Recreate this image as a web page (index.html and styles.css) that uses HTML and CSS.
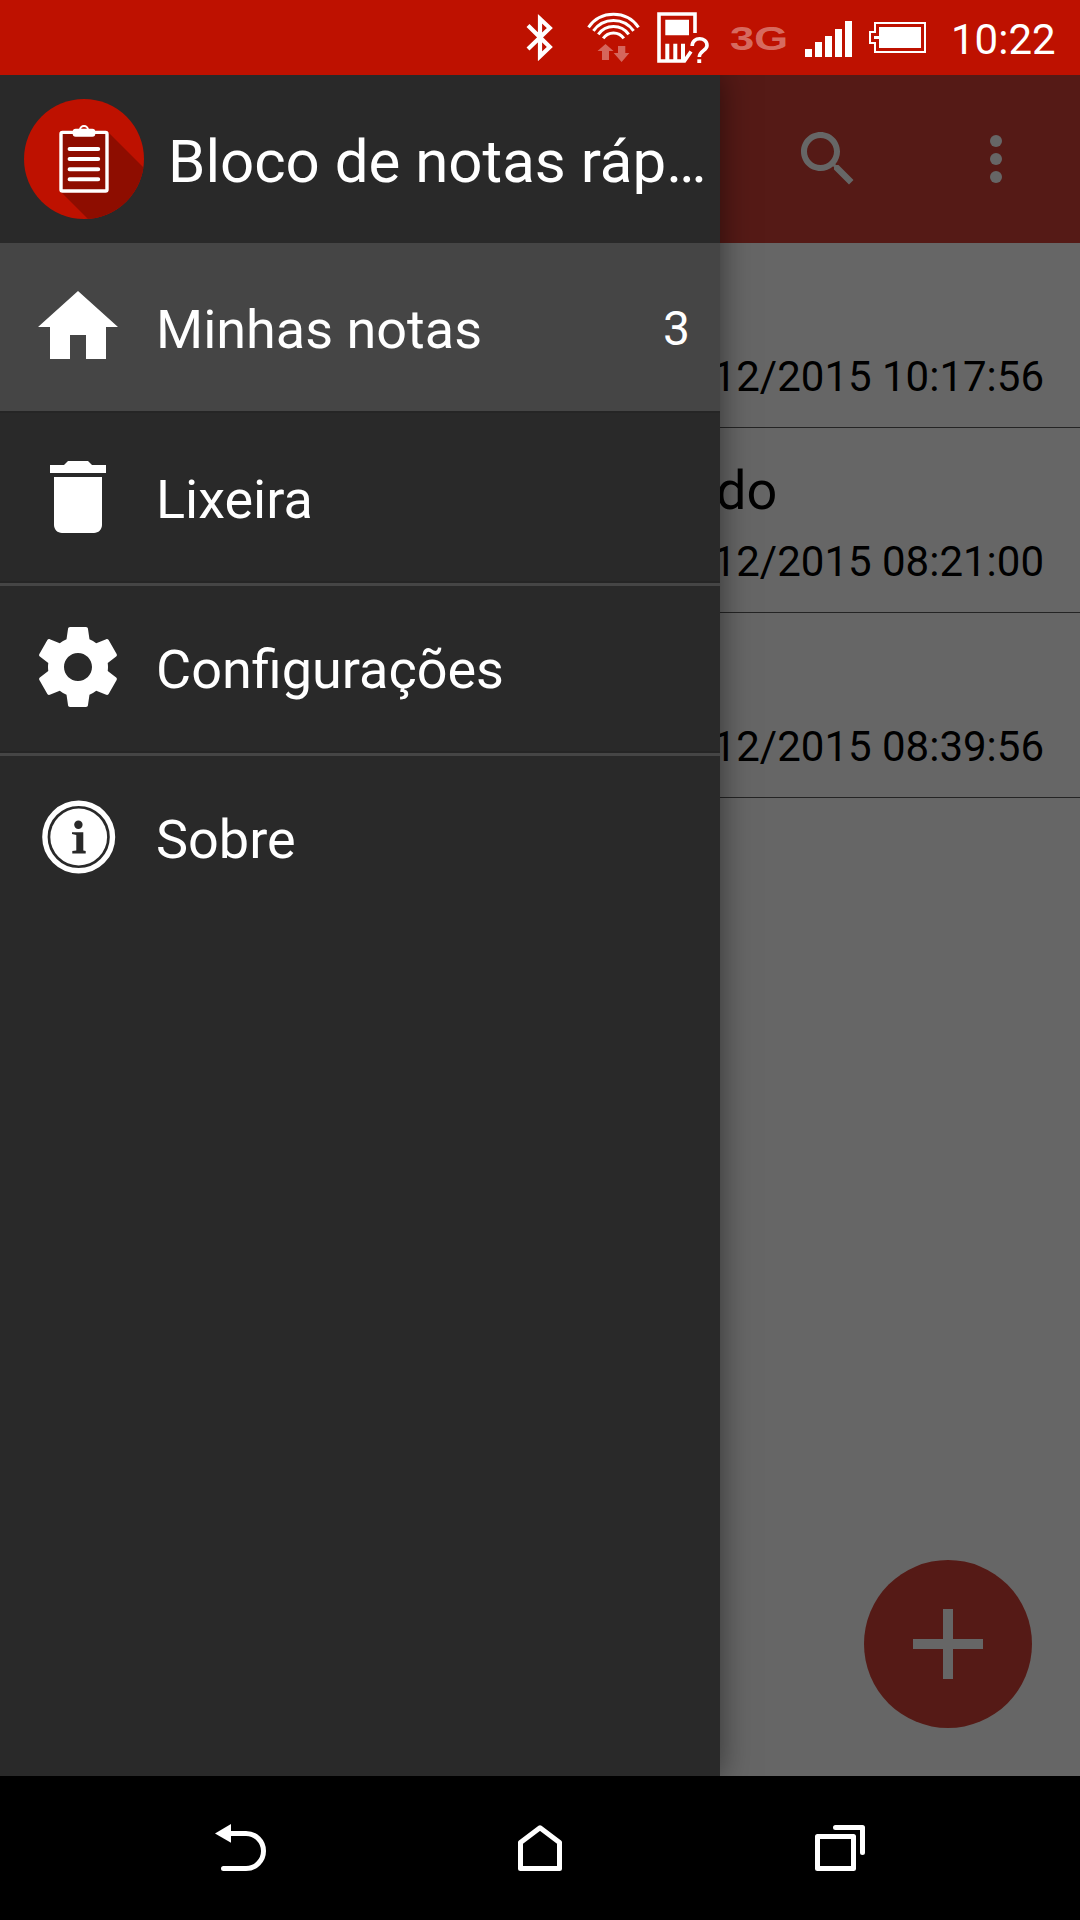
FILE: index.html
```html
<!doctype html>
<html lang="pt">
<head>
    <meta charset="UTF-8" />
    <meta name="viewport" content="width=device-width, initial-scale=1.0" />
    <title>Bloco de notas</title>
    <link rel="stylesheet" href="styles.css">
</head>
<body>
    <header class="status-bar">
        <svg class="status-icon" width="60" height="75" viewBox="520 0 60 75">
            <path d="M528 25.5 L549.8 47 L540 56.3 V18.8 L549.8 28 L528 49" fill="none" stroke="#fff" stroke-width="4.2" />
        </svg>
        <svg class="status-icon" width="70" height="75" viewBox="580 0 70 75">
            <g fill="none" stroke="#fff" stroke-width="3">
                <path d="M588.5 27.3 A30.5 30.5 0 0 1 638.5 27.3" />
                <path d="M593.4 30.9 A24.5 24.5 0 0 1 633.6 30.9" />
                <path d="M598.3 34.4 A18.5 18.5 0 0 1 628.7 34.4" />
                <path d="M603.2 38.3 A12.5 12.5 0 0 1 623.8 38.3" />
            </g>
            <path class="faded" d="M605.5 44 L613.5 51 H609 V60 H602 V51 H597.5 Z M618 46 H625.3 V53 H629.3 L621.6 62 L613.7 53 H618 Z" />
        </svg>
        <svg class="status-icon" width="75" height="75" viewBox="650 0 75 75">
            <path d="M695 33 V14 H659 V61 H684.5 L691 51.5" fill="none" stroke="#fff" stroke-width="3.6" />
            <path d="M665.3 19.7 H689 V35.3 H665.3 Z M665.3 43.7 H669.3 V61 H665.3 Z M673.3 43.7 H677.3 V61 H673.3 Z M681 43.7 H685 V61 H681 Z" fill="#fff" />
            <path d="M692.2 46 C692 36.5 707 36.5 707 45.5 C707 50.5 699.5 51 699.3 57" fill="none" stroke="#fff" stroke-width="3.6" />
            <path d="M697.3 59.3 H701.2 V63 H697.3 Z" fill="#fff" />
        </svg>
        <svg class="status-icon" width="75" height="75" viewBox="725 0 75 75">
            <text class="network" x="730" y="50" textLength="58" lengthAdjust="spacingAndGlyphs">3G</text>
        </svg>
        <svg class="status-icon" width="62" height="75" viewBox="800 0 62 75">
            <path d="M805 49h7v8h-7zM815 42h7v15h-7zM825 36h7v21h-7zM835 29h7v28h-7zM845 21h7v36h-7z" fill="#fff" />
        </svg>
        <svg class="status-icon" width="89" height="75" viewBox="862 0 89 75">
            <path d="M875 23 H925 V52 H875 V43 H870 V32 H875 Z" fill="none" stroke="#fff" stroke-width="2" />
            <path d="M879 27 H921 V48 H879 V39 H874 V36 H879 Z" fill="#fff" />
        </svg>
        <span class="clock">10:22</span>
    </header>

    <div class="screen">
        <main class="content">
            <div class="toolbar">
                <svg width="72" height="72" viewBox="0 0 24 24" fill="#fff">
                    <path d="M15.5 14h-.79l-.28-.27C15.41 12.59 16 11.11 16 9.5 16 5.91 13.09 3 9.5 3S3 5.91 3 9.5 5.91 16 9.5 16c1.61 0 3.09-.59 4.23-1.57l.27.28v.79l5 4.99L20.49 19l-4.99-5zm-6 0C7.01 14 5 11.99 5 9.5S7.01 5 9.5 5 14 7.01 14 9.5 11.99 14 9.5 14z" />
                </svg>
                <svg width="72" height="72" viewBox="0 0 24 24" fill="#fff">
                    <circle cx="12" cy="6" r="2" />
                    <circle cx="12" cy="12" r="2" />
                    <circle cx="12" cy="18" r="2" />
                </svg>
            </div>
            <div class="note">
                <div class="note-title"></div>
                <div class="note-date">12/2015 10:17:56</div>
            </div>
            <div class="note">
                <div class="note-title">do</div>
                <div class="note-date">12/2015 08:21:00</div>
            </div>
            <div class="note">
                <div class="note-title"></div>
                <div class="note-date">12/2015 08:39:56</div>
            </div>
            <div class="fab">
                <svg width="70" height="70" viewBox="0 0 70 70">
                    <path d="M30 0h10v30h30v10H40v30H30V40H0V30h30z" fill="#fff" />
                </svg>
            </div>
        </main>

        <div class="scrim"></div>

        <nav class="drawer">
            <div class="drawer-header">
                <svg class="logo" width="120" height="120" viewBox="0 0 120 120">
                    <clipPath id="disc"><circle cx="60" cy="60" r="60" /></clipPath>
                    <circle cx="60" cy="60" r="60" fill="#be1100" />
                    <path d="M84 33 L130 79 V130 H74 L36.5 92.5 V33 Z" fill="#8e0d00" clip-path="url(#disc)" />
                    <rect x="37" y="33.4" width="46" height="58.6" rx="1.5" fill="none" stroke="#fff" stroke-width="3.4" />
                    <rect x="48.7" y="29.7" width="22.6" height="8" rx="3" fill="#fff" />
                    <path d="M56 31 A4 4 0 0 1 64 31" fill="none" stroke="#fff" stroke-width="2" />
                    <path d="M45.6 50H74.2M45.6 60H74.2M45.6 70.2H74.2M45.6 80.2H74.2" stroke="#fff" stroke-width="4" stroke-linecap="round" />
                </svg>
                <span class="app-name">Bloco de notas ráp…</span>
            </div>
            <div class="menu-item active">
                <svg width="96" height="96" viewBox="0 0 24 24" fill="#fff">
                    <path d="M10 20v-6h4v6h5v-8h3L12 3 2 12h3v8z" />
                </svg>
                <span class="label">Minhas notas</span>
                <span class="count">3</span>
            </div>
            <div class="menu-item">
                <svg width="96" height="96" viewBox="0 0 24 24" fill="#fff">
                    <path d="M6 19c0 1.1.9 2 2 2h8c1.1 0 2-.9 2-2V7H6v12zM19 4h-3.5l-1-1h-5l-1 1H5v2h14V4z" />
                </svg>
                <span class="label">Lixeira</span>
            </div>
            <div class="menu-item divided">
                <svg width="96" height="96" viewBox="0 0 24 24" fill="#fff">
                    <path d="M19.43 12.98c.04-.32.07-.64.07-.98s-.03-.66-.07-.98l2.11-1.65c.19-.15.24-.42.12-.64l-2-3.46c-.12-.22-.39-.3-.61-.22l-2.49 1c-.52-.4-1.08-.73-1.69-.98l-.38-2.65C14.46 2.18 14.25 2 14 2h-4c-.25 0-.46.18-.49.42l-.38 2.65c-.61.25-1.17.59-1.69.98l-2.49-1c-.23-.09-.49 0-.61.22l-2 3.46c-.13.22-.07.49.12.64l2.11 1.65c-.04.32-.07.65-.07.98s.03.66.07.98l-2.11 1.65c-.19.15-.24.42-.12.64l2 3.46c.12.22.39.3.61.22l2.49-1c.52.4 1.08.73 1.69.98l.38 2.65c.03.24.24.42.49.42h4c.25 0 .46-.18.49-.42l.38-2.65c.61-.25 1.17-.59 1.69-.98l2.49 1c.23.09.49 0 .61-.22l2-3.46c.12-.22.07-.49-.12-.64l-2.11-1.65zM12 15.5c-1.93 0-3.5-1.57-3.5-3.5s1.57-3.5 3.5-3.5 3.5 1.57 3.5 3.5-1.57 3.5-3.5 3.5z" />
                </svg>
                <span class="label">Configurações</span>
            </div>
            <div class="menu-item divided">
                <svg width="96" height="96" viewBox="0 0 96 96">
                    <circle cx="48.7" cy="48" r="33.8" fill="none" stroke="#fff" stroke-width="5.4" />
                    <circle cx="48.7" cy="48" r="28.4" fill="#fff" />
                    <circle cx="48.4" cy="35.8" r="4.2" fill="#292929" />
                    <path d="M42 43.3H53.3V61.5L55.7 62V64.5H42.3V62L46.3 61.5V46L42 45Z" fill="#292929" />
                </svg>
                <span class="label">Sobre</span>
            </div>
        </nav>
    </div>

    <footer class="nav-bar">
        <svg width="60" height="60" viewBox="0 0 60 60">
            <path d="M5 15.4L21 6V24.8Z" fill="#fff" />
            <path d="M20 15.5H36A17.4 17.4 0 0 1 36 50.5H13.5" fill="none" stroke="#fff" stroke-width="5" stroke-linecap="round" />
        </svg>
        <svg width="60" height="60" viewBox="0 0 60 60">
            <path d="M30 9.7L49.5 24.5V50.5H10.5V24.5Z" fill="none" stroke="#fff" stroke-width="5" stroke-linejoin="round" />
        </svg>
        <svg width="60" height="60" viewBox="0 0 60 60" fill="none" stroke="#fff" stroke-width="5" stroke-linejoin="round" stroke-linecap="round">
            <path d="M7.5 18.5H43.5V50.5H7.5Z" />
            <path d="M25.5 9.5H52.5V34.5" />
        </svg>
    </footer>
</body>
</html>
```
FILE: styles.css
```css
body {
    font-family: Roboto, 'Noto Sans', sans-serif;
    margin: 0;
    width: 1080px;
    height: 1920px;
    display: flex;
    flex-direction: column;
    overflow: hidden;
    background-color: #000;
}

svg {
    display: block;
    flex-shrink: 0;
}

/* Status bar */
.status-bar {
    height: 75px;
    display: flex;
    justify-content: flex-end;
    align-items: center;
    padding-right: 24px;
    background-color: #be1100;
    color: #fff;
}

.faded {
    fill: #fff;
    fill-opacity: 0.36;
}

.network {
    font-family: 'Liberation Sans', sans-serif;
    font-weight: bold;
    font-size: 34px;
    fill: #fff;
    fill-opacity: 0.4;
}

.clock {
    width: 105px;
    font-size: 42px;
    padding-top: 4px;
}

/* Notes list */
.screen {
    position: relative;
    height: 1701px;
    overflow: hidden;
}

.content {
    height: 100%;
    background-color: #fff;
    color: #000;
}

.toolbar {
    height: 168px;
    display: flex;
    justify-content: flex-end;
    align-items: center;
    gap: 96px;
    padding-right: 48px;
    box-sizing: border-box;
    background-color: #d54337;
}

.note {
    height: 185px;
    box-sizing: border-box;
    padding: 31px 36px 0 716px;
    border-bottom: 1px solid #5a5a5a;
}

.note-title {
    height: 63px;
    line-height: 63px;
    font-size: 54px;
}

.note-date {
    margin-top: 15px;
    line-height: 49px;
    font-size: 42px;
    display: flex;
    justify-content: flex-end;
    white-space: nowrap;
}

.fab {
    position: absolute;
    right: 48px;
    bottom: 48px;
    width: 168px;
    height: 168px;
    border-radius: 50%;
    display: flex;
    justify-content: center;
    align-items: center;
    background-color: #d54337;
}

.scrim {
    position: absolute;
    inset: 0;
    background-color: rgba(0, 0, 0, 0.6);
}

/* Drawer */
.drawer {
    position: absolute;
    top: 0;
    left: 0;
    width: 720px;
    height: 100%;
    background-color: #292929;
    color: #fff;
    box-shadow: 0 0 30px rgba(0, 0, 0, 0.5);
}

.drawer-header {
    height: 168px;
    display: flex;
    align-items: center;
    gap: 24px;
    padding-left: 24px;
}

.app-name {
    font-size: 60px;
    padding-top: 5px;
    white-space: nowrap;
}

.menu-item {
    height: 170px;
    box-sizing: border-box;
    display: flex;
    align-items: center;
    gap: 30px;
    padding: 0 30px;
    border-bottom: 2px solid #252525;
}

.menu-item.active {
    background-color: #454545;
}

.menu-item.divided {
    box-shadow: inset 0 3px #454545;
}

.menu-item:last-child {
    border-bottom-color: transparent;
}

.label {
    flex: 1;
    font-size: 54px;
    padding-top: 4px;
}

.count {
    font-size: 48px;
    padding-top: 2px;
}

/* Navigation bar */
.nav-bar {
    height: 144px;
    display: flex;
    justify-content: space-between;
    align-items: center;
    padding: 0 210px;
    background-color: #000;
}
```
